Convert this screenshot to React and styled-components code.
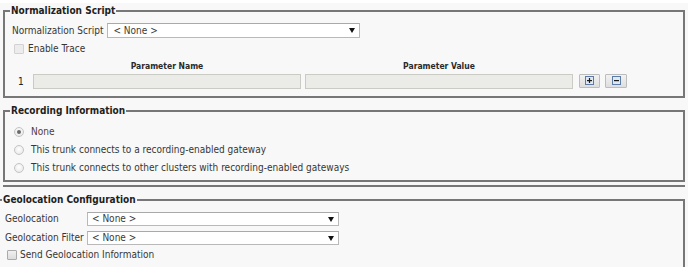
import React from "react";
import styled, { createGlobalStyle } from "styled-components";

const GlobalStyle = createGlobalStyle`
  html, body { margin: 0; padding: 0; }
  body {
    background: #f8f8f8;
    font-family: "DejaVu Sans Condensed", "DejaVu Sans", sans-serif;
    font-size: 10px;
    color: #363636;
  }
  * { box-sizing: border-box; }
`;

const Page = styled.div`
  border-top: 3px solid #ffffff;
  padding-top: 2px;
  height: 267px;
  overflow: hidden;
`;

const Fieldset = styled.fieldset`
  margin: ${(p) => p.$margin || "0 3px"};
  padding: 0;
  border: 2px solid #777777;
  min-width: 0;
`;

const Legend = styled.legend`
  font-weight: bold;
  color: #1e1e1e;
  line-height: 12px;
  padding: 0 1px;
  margin-left: ${(p) => p.$offset || 5}px;
`;

const Body = styled.div`
  padding: ${(p) => p.$pad};
  display: flex;
  flex-direction: column;
`;

const FieldRow = styled.div`
  display: flex;
  align-items: center;
  gap: 4px;
  height: 15px;
`;

const Label = styled.span`
  line-height: 12px;
  white-space: nowrap;
`;

const SelectBox = styled.div`
  width: ${(p) => p.$width}px;
  height: ${(p) => p.$height || 14}px;
  background: #ffffff;
  border: 1px solid #b9b9b9;
  border-top-color: #a9a9a9;
  display: flex;
  align-items: center;
  justify-content: space-between;
  padding: 0 4px 0 ${(p) => p.$textPad || 4}px;
  color: #3a3a3a;
  line-height: 12px;
`;

const Arrow = () => (
  <svg width="6" height="5" viewBox="0 0 6 5">
    <path d="M0 0 L6 0 L3 5 Z" fill="#111" />
  </svg>
);

const Select = ({ width, height, textPad }) => (
  <SelectBox $width={width} $height={height} $textPad={textPad}>
    <span>&lt; None &gt;</span>
    <Arrow />
  </SelectBox>
);

const CheckRow = styled.div`
  display: flex;
  align-items: center;
  gap: ${(p) => p.$gap || 4}px;
  height: ${(p) => p.$height || 14}px;
  margin-top: ${(p) => p.$top || 0}px;
  padding-left: ${(p) => p.$indent || 0}px;
  color: ${(p) => p.$color || "#363636"};
`;

const CheckBox = styled.span`
  width: 10px;
  height: 10px;
  border: 1px solid ${(p) => (p.$disabled ? "#d2d2d2" : "#ababab")};
  background: ${(p) =>
    p.$disabled ? "#ececec" : "linear-gradient(#f0f0f0, #dcdcdc)"};
  border-radius: 1px;
  flex: none;
`;

const Radio = styled.span`
  width: 10px;
  height: 10px;
  border-radius: 50%;
  border: 1px solid #c4c4c4;
  background: radial-gradient(circle at 50% 40%, #ffffff, #e4e4e4);
  flex: none;
  display: flex;
  align-items: center;
  justify-content: center;
  &::after {
    content: "";
    width: 4px;
    height: 4px;
    border-radius: 50%;
    background: ${(p) => (p.$checked ? "#6a6a6a" : "transparent")};
  }
`;

const ParamGrid = styled.div`
  display: grid;
  grid-template-columns: 17px 268px 268px 21px 22px;
  grid-template-rows: 12px 15px;
  column-gap: 4px;
  row-gap: 2px;
  margin-top: 4px;
  align-items: center;
`;

const Cell = styled.div`
  grid-column: ${(p) => p.$col};
  grid-row: ${(p) => p.$row};
`;

const ColHead = styled(Cell)`
  text-align: center;
  font-weight: bold;
  font-size: 8.5px;
  color: #2a2a2a;
  line-height: 12px;
`;

const Index = styled(Cell)`
  padding-left: 6px;
  line-height: 12px;
  color: #222;
`;

const TextInput = styled(Cell)`
  height: 15px;
  background: #ebebe7;
  border: 1px solid #cbcbc6;
`;

const IconButton = styled.button`
  grid-column: ${(p) => p.$col};
  grid-row: 2;
  width: ${(p) => p.$w}px;
  height: 14px;
  margin: 0 0 2px ${(p) => p.$ml}px;
  padding: 0;
  border: 1px solid #bdbdbd;
  border-radius: 1px;
  background: linear-gradient(#f2f2f2, #dedede);
  display: flex;
  align-items: center;
  justify-content: center;
`;

const PlusMinus = ({ plus }) => (
  <svg width="9" height="9" viewBox="0 0 9 9">
    <rect x="0.5" y="0.5" width="8" height="8" fill="#dfe7f1" stroke="#5c7ba6" />
    <rect x="2" y="4" width="5" height="1.2" fill="#1a1a1a" />
    {plus && <rect x="3.9" y="2" width="1.2" height="5" fill="#1a1a1a" />}
  </svg>
);

const Rule = styled.div`
  height: 2px;
  margin: 3px 3px 0 3px;
  background: #777777;
`;

const GeoGrid = styled.div`
  display: grid;
  grid-template-columns: 82px 252px;
  row-gap: 5px;
  align-items: center;
  padding-left: 5px;
`;

export default function App() {
  return (
    <>
      <GlobalStyle />
      <Page>
        <Fieldset>
          <Legend>Normalization Script</Legend>
          <Body $pad="6px 0 7px 7px">
            <FieldRow>
              <Label>Normalization Script</Label>
              <Select width={253} height={15} textPad={5} />
            </FieldRow>
            <CheckRow $top={4} $indent={2} $gap={4}>
              <CheckBox $disabled />
              <Label>Enable Trace</Label>
            </CheckRow>
            <ParamGrid>
              <ColHead $col={2} $row={1}>Parameter Name</ColHead>
              <ColHead $col={3} $row={1}>Parameter Value</ColHead>
              <Index $col={1} $row={2}>1</Index>
              <TextInput $col={2} $row={2} />
              <TextInput $col={3} $row={2} />
              <IconButton $col={4} $w={21} $ml={2} aria-label="add">
                <PlusMinus plus />
              </IconButton>
              <IconButton $col={5} $w={22} $ml={3} aria-label="remove">
                <PlusMinus />
              </IconButton>
            </ParamGrid>
          </Body>
        </Fieldset>

        <Fieldset $margin="7px 3px 0 3px">
          <Legend>Recording Information</Legend>
          <Body $pad="6px 0 3px 9px">
            <CheckRow $height={18} $gap={7} $color="#553a3a">
              <Radio $checked />
              <Label>None</Label>
            </CheckRow>
            <CheckRow $height={18} $gap={7}>
              <Radio />
              <Label>This trunk connects to a recording-enabled gateway</Label>
            </CheckRow>
            <CheckRow $height={18} $gap={7}>
              <Radio />
              <Label>This trunk connects to other clusters with recording-enabled gateways</Label>
            </CheckRow>
          </Body>
        </Fieldset>

        <Rule />

        <Fieldset $margin="7px 3px 0 -2px">
          <Legend $offset={2}>Geolocation Configuration</Legend>
          <Body $pad="6px 0 12px 0">
            <GeoGrid>
              <Label>Geolocation</Label>
              <Select width={252} height={14} />
              <Label>Geolocation Filter</Label>
              <Select width={252} height={14} />
            </GeoGrid>
            <CheckRow $top={2} $height={15} $indent={7} $gap={3}>
              <CheckBox />
              <Label>Send Geolocation Information</Label>
            </CheckRow>
          </Body>
        </Fieldset>
      </Page>
    </>
  );
}
